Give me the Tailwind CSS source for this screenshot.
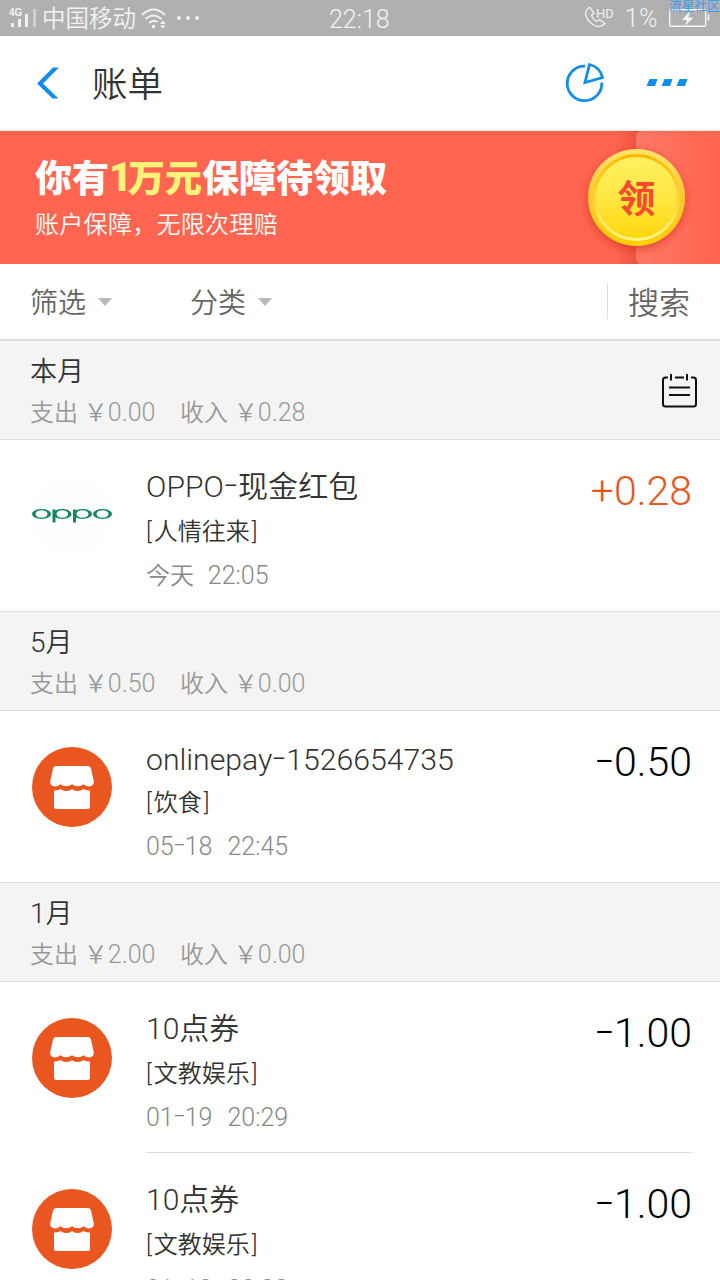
<!DOCTYPE html>
<html lang="zh-CN">
<head>
    <meta charset="UTF-8">
    <meta name="viewport" content="width=device-width, initial-scale=1.0">
    <title>账单</title>
    <script src="https://cdn.jsdelivr.net/npm/@tailwindcss/browser@4"></script>
</head>
<body class="h-screen overflow-hidden bg-white font-['Roboto','Noto_Sans_CJK_SC',sans-serif] font-[350] text-[#333333]">

    <!-- Shared shop icon -->
    <svg class="hidden">
        <symbol id="shop" viewBox="0 0 80 80">
            <circle cx="40" cy="40" r="40" fill="#e9561f" />
            <path fill="#fff" d="M24 19h32q2.500 0 3 2.500l2.800 13q.5 4-4.300 5q-3.500 0-6-2.200q-2 2-5.500 2t-6-2q-2.500 2-6 2t-5.500-2q-2.500 2.200-6 2.200q-4.800-1-4.300-5l2.800-13q.5-2.500 3-2.500z" />
            <path fill="#fff" d="M22 43.500q4.500 0 6.500-1.500q2 2 6 2t5.500-2q2 2 5.500 2t6-2q2 1.500 6.500 1.500v16q0 2.500-2.500 2.500h-31q-2.500 0-2.500-2.500z" />
        </symbol>
    </svg>

    <!-- Status bar -->
    <div class="relative flex h-9 items-center bg-[#b0b0b0] text-[#f2f2f2]">
        <svg class="ml-2 h-9 w-[30px] shrink-0" viewBox="8 0 30 36" fill="#f2f2f2">
            <text x="9" y="16" font-size="10" font-weight="700" font-family="Liberation Sans, sans-serif">4G</text>
            <path d="M11 23h3v4h-3zM18 19h3v8h-3zM25 14h3v13h-3z" />
            <path fill="#d2d2d2" d="M33 9h3v18h-3z" />
        </svg>
        <span class="ml-1 w-[98px] whitespace-nowrap pt-0.5 text-[23.5px] leading-9">中国移动</span>
        <svg class="h-9 w-[64px] shrink-0" viewBox="140 0 64 36" fill="none" stroke="#f2f2f2" stroke-width="2">
            <path d="M142 15q11.500-11 23 0M145.500 19q8-7 16 0M149 23q4.500-4 8.500-1" />
            <g fill="#f2f2f2" stroke="none">
                <circle cx="153.500" cy="26.500" r="1.700" />
                <path d="M160 24h5.500l-2.700-3.500zM160 25.500h5.500l-2.700 3z" />
                <circle cx="179" cy="18" r="2" />
                <circle cx="188" cy="18" r="2" />
                <circle cx="197" cy="18" r="2" />
            </g>
        </svg>
        <span class="ml-[125px] pt-[3px] text-[25px] leading-9">22:18</span>
        <div class="ml-auto mr-2.5 flex items-center">
            <svg class="h-9 w-[32px]" viewBox="583 0 32 36" fill="none" stroke="#f2f2f2" stroke-width="1.300">
                <path d="M588.500 8q-4 3-2.500 8q3 7 9.500 10q5 2 9.500-2.500l-5.500-4-3 2q-3.500-2-5-6l2.500-2.500-4-5.500z" />
                <text x="596" y="17.500" font-size="13" fill="#f2f2f2" stroke="none" font-family="Roboto, sans-serif" font-weight="400">HD</text>
            </svg>
            <span class="mt-0.5 ml-2.5 text-[25px] leading-9 tracking-[0.5px]">1%</span>
            <svg class="ml-2.5 h-9 w-[42px]" viewBox="668 0 42 36" fill="none" stroke="#f2f2f2" stroke-width="1.500">
                <rect x="669.700" y="9.700" width="36" height="16.500" rx="1.500" />
                <path fill="#f2f2f2" stroke="none" d="M707.500 14.500h1.800v6h-1.800zM690 11l-8 9h5l-2 6 8.500-8.500h-5z" />
            </svg>
        </div>
        <span class="absolute -top-0.5 left-[669px] whitespace-nowrap text-[12.7px] leading-4 font-normal text-[#3a9cf0]">流星社区</span>
    </div>

    <!-- Title bar -->
    <header class="flex h-[95px] items-center border-b border-[#e5e5e5] pr-8 pl-9">
        <svg class="h-8 w-6" viewBox="36 66 24 32" fill="#108ee9">
            <path d="M53 66.500h6L43 82.500l15.500 15h-6L37 82.500z" />
        </svg>
        <h1 class="ml-8 pt-1.5 text-[35.500px] leading-none">账单</h1>
        <svg class="ml-auto size-10" viewBox="566 63 40 40" fill="none" stroke="#108ee9" stroke-width="2.800">
            <path d="M586 66.100a17.300 17.300 0 1 0 16.800 16.400" />
            <path d="M590.500 64.500q10.500 2.500 13 13l-17.500 5z" />
        </svg>
        <svg class="ml-[41px] h-2 w-[42px]" viewBox="646 79 42 8" fill="#108ee9">
            <path d="M649.500 79h8l-2.500 7h-8.500zM664.500 79h8l-2.500 7h-8.500zM679.500 79h8l-2.500 7h-8.500z" />
        </svg>
    </header>

    <!-- Banner -->
    <section class="flex h-[133px] items-center justify-between bg-[#ff6550] text-white">
        <div class="pt-[3px] pl-[35px]">
            <p class="text-[37px] leading-[48px] font-black">你有<span class="text-[#fff27a]"><span class="inline-block w-[19px] -translate-y-px text-[40px] leading-none">1</span>万元</span>保障待领取</p>
            <p class="mt-[3px] text-[24px] leading-9 tracking-[0.3px]">账户保障，无限次理赔</p>
        </div>
        <svg class="h-[133px] w-[160px]" viewBox="560 131 160 133">
            <defs>
                <linearGradient id="rim" x2="0" y2="1">
                    <stop stop-color="#ffe56a" />
                    <stop offset=".5" stop-color="#ffc62e" />
                    <stop offset="1" stop-color="#ffd000" />
                </linearGradient>
                <linearGradient id="coin" x2="0" y2="1">
                    <stop stop-color="#fff05f" />
                    <stop offset=".45" stop-color="#ffe948" />
                    <stop offset="1" stop-color="#ffd60c" />
                </linearGradient>
                <linearGradient id="ring" x2="0" y2="1">
                    <stop stop-color="#ffb800" />
                    <stop offset=".55" stop-color="#ffd83c" />
                    <stop offset="1" stop-color="#fff58a" />
                </linearGradient>
                <linearGradient id="fold">
                    <stop stop-color="#ff7766" />
                    <stop offset="1" stop-color="#ff6550" />
                </linearGradient>
                <linearGradient id="shade">
                    <stop stop-color="#ff6550" />
                    <stop offset="1" stop-color="#ea5040" />
                </linearGradient>
                <filter id="shadow" x="-20%" y="-20%" width="140%" height="140%">
                    <feDropShadow dx="0" dy="3" stdDeviation="4" flood-color="#c02010" flood-opacity=".55" />
                </filter>
            </defs>
            <path fill="url(#shade)" d="M616 131h24v133h-24z" />
            <path fill="url(#fold)" d="M720 131h-78q-6 0-6 6v121q0 6 6 6h78z" />
            <circle cx="636.500" cy="197.500" r="48.500" fill="url(#rim)" filter="url(#shadow)" />
            <circle cx="636.500" cy="197.500" r="42" fill="url(#coin)" stroke="url(#ring)" stroke-width="3" />
            <text x="636.500" y="212" text-anchor="middle" font-size="38" font-weight="700" fill="#f9492f">领</text>
        </svg>
    </section>

    <!-- Filters -->
    <nav class="flex h-[76px] items-center border-b border-[#dddddd] pr-[30px] pl-[30px] text-[28px] leading-none text-[#666666]">
        <span class="pt-1">筛选</span>
        <svg class="ml-3 h-2 w-3.5" viewBox="0 0 14 8" fill="#b8b8b8"><path d="M0 0h14l-7 8z" /></svg>
        <span class="ml-[78px] pt-1">分类</span>
        <svg class="ml-3 h-2 w-3.5" viewBox="0 0 14 8" fill="#b8b8b8"><path d="M0 0h14l-7 8z" /></svg>
        <span class="mb-0.5 ml-auto h-9 w-px bg-[#dddddd]"></span>
        <span class="ml-5 pt-1 text-[31px]">搜索</span>
    </nav>

    <!-- This month -->
    <section class="flex h-[100px] items-center justify-between border-y border-[#dddddd] bg-[#f4f4f4] pr-[23px] pl-[30px]">
        <div class="pt-[5px]">
            <h2 class="text-[27px] leading-10">本月</h2>
            <p class="flex text-[24px] leading-[42px] text-[#999999]"><span class="w-[150px]">支出 ￥<span class="text-[25px]">0.00</span></span><span>收入 ￥<span class="text-[25px]">0.28</span></span></p>
        </div>
        <svg class="size-9" viewBox="661 372 36 36" fill="none" stroke="#111" stroke-width="2">
            <path d="M668 377.500h-2.500q-2.500 0-2.500 2.500v24q0 2.500 2.500 2.500h28q2.500 0 2.500-2.500v-24q0-2.500-2.500-2.500H691M675 377.500h9M671 374v6.500M687 374v6.500M669 387.500h21M669 395h21" />
        </svg>
    </section>

    <article class="flex h-[171px] pr-7 pl-8">
        <svg class="mt-9 size-20" viewBox="32 476 80 80" fill="#12875a">
            <circle cx="72" cy="516" r="40" fill="#fefefe" />
            <g fill-rule="evenodd">
                <path d="M32 514a9.500 5 0 1 0 19 0a9.500 5 0 1 0-19 0zm3.500 0a6 3.800 0 1 1 12 0a6 3.800 0 1 1-12 0z" />
                <path d="M53 514a9.200 5 0 1 0 18.500 0a9.200 5 0 1 0-18.500 0zm3.500 0a5.800 3.800 0 1 1 11.600 0a5.800 3.800 0 1 1-11.600 0z" />
                <path d="M73 514a9.500 5 0 1 0 19 0a9.500 5 0 1 0-19 0zm3.500 0a6 3.800 0 1 1 12 0a6 3.800 0 1 1-12 0z" />
                <path d="M93 514a9.500 5 0 1 0 19 0a9.500 5 0 1 0-19 0zm3.500 0a6 3.800 0 1 1 12 0a6 3.800 0 1 1-12 0z" />
            </g>
            <path d="M52.500 509.500h3v13h-3zM73 509.500h3v13h-3z" />
        </svg>
        <div class="ml-[34px] pt-[24px]">
            <h3 class="text-[30px] leading-[45px] tracking-[0.1px]">OPPO<span class="inline-block w-[14px] -translate-y-0.5 scale-x-150 text-center">-</span>现金红包</h3>
            <p class="pt-px text-[24px] leading-[44px]"><span class="mr-0.5">[</span>人情往来<span class="ml-0.5">]</span></p>
            <p class="text-[24px] leading-[44px] text-[#888888]">今天 <span class="ml-2 text-[25px]">22:05</span></p>
        </div>
        <p class="ml-auto pt-[26px] text-[41px] leading-[50px] text-[#e9561f]">+0.28</p>
    </article>

    <!-- May -->
    <section class="flex h-[100px] items-center border-y border-[#dddddd] bg-[#f4f4f4] pl-[30px]">
        <div class="pt-[5px]">
            <h2 class="text-[27px] leading-10"><span class="text-[28px]">5</span>月</h2>
            <p class="flex text-[24px] leading-[42px] text-[#999999]"><span class="w-[150px]">支出 ￥<span class="text-[25px]">0.50</span></span><span>收入 ￥<span class="text-[25px]">0.00</span></span></p>
        </div>
    </section>

    <article class="flex h-[171px] pr-7 pl-8">
        <svg class="mt-9 size-20"><use href="#shop" /></svg>
        <div class="ml-[34px] pt-[27px]">
            <h3 class="text-[30.2px] leading-[44px]">onlinepay<span class="inline-block w-[14px] -translate-y-0.5 scale-x-150 text-center">-</span>1526654735</h3>
            <p class="-mt-px text-[24px] leading-[44px]"><span class="mr-0.5">[</span>饮食<span class="ml-0.5">]</span></p>
            <p class="text-[25px] leading-[44px] text-[#888888]">05<span class="inline-block w-[11px] -translate-y-0.5 scale-x-150 text-center">-</span>18<span class="ml-[15px]">22:45</span></p>
        </div>
        <p class="ml-auto pt-[26px] text-[41px] leading-[50px] text-black"><span class="inline-block w-[19px] -translate-y-0.5 scale-x-150 text-center">-</span>0.50</p>
    </article>

    <!-- January -->
    <section class="flex h-[100px] items-center border-y border-[#dddddd] bg-[#f4f4f4] pl-[30px]">
        <div class="pt-[5px]">
            <h2 class="text-[27px] leading-10"><span class="text-[28px]">1</span>月</h2>
            <p class="flex text-[24px] leading-[42px] text-[#999999]"><span class="w-[150px]">支出 ￥<span class="text-[25px]">2.00</span></span><span>收入 ￥<span class="text-[25px]">0.00</span></span></p>
        </div>
    </section>

    <article class="flex h-[171px] pr-7 pl-8">
        <svg class="mt-9 size-20"><use href="#shop" /></svg>
        <div class="ml-[34px] flex grow border-b border-[#dddddd] pt-[24px]">
            <div>
                <h3 class="text-[30px] leading-[45px]">10点券</h3>
                <p class="pt-px text-[24px] leading-[44px]"><span class="mr-0.5">[</span>文教娱乐<span class="ml-0.5">]</span></p>
                <p class="text-[25px] leading-[44px] text-[#888888]">01<span class="inline-block w-[11px] -translate-y-0.5 scale-x-150 text-center">-</span>19<span class="ml-[15px]">20:29</span></p>
            </div>
            <p class="ml-auto pt-0.5 text-[41px] leading-[50px] text-black"><span class="inline-block w-[19px] -translate-y-0.5 scale-x-150 text-center">-</span>1.00</p>
        </div>
    </article>

    <article class="flex h-[171px] pr-7 pl-8">
        <svg class="mt-9 size-20"><use href="#shop" /></svg>
        <div class="ml-[34px] flex grow pt-[24px]">
            <div>
                <h3 class="text-[30px] leading-[45px]">10点券</h3>
                <p class="pt-px text-[24px] leading-[44px]"><span class="mr-0.5">[</span>文教娱乐<span class="ml-0.5">]</span></p>
                <p class="pt-px text-[25px] leading-[44px] text-[#888888]">01<span class="inline-block w-[11px] -translate-y-0.5 scale-x-150 text-center">-</span>18<span class="ml-[15px]">20:28</span></p>
            </div>
            <p class="ml-auto pt-0.5 text-[41px] leading-[50px] text-black"><span class="inline-block w-[19px] -translate-y-0.5 scale-x-150 text-center">-</span>1.00</p>
        </div>
    </article>

</body>
</html>
